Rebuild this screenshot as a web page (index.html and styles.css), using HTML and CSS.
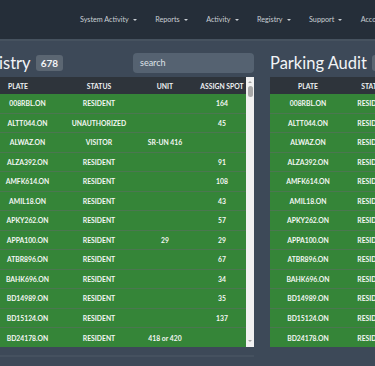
FILE: index.html
```html
<!DOCTYPE html>
<html>
<head>
<meta charset="utf-8">
<link rel="stylesheet" href="styles.css">
</head>
<body>
<nav class="nav">
  <a class="nav-item">System Activity <span class="caret"></span></a>
  <a class="nav-item">Reports <span class="caret"></span></a>
  <a class="nav-item">Activity <span class="caret"></span></a>
  <a class="nav-item">Registry <span class="caret"></span></a>
  <a class="nav-item">Support <span class="caret"></span></a>
  <a class="nav-item">Account <span class="caret"></span></a>
</nav>
<main class="page">
  <section class="panel panel-left">
    <div class="panel-head">
      <h2 class="title title-cut">Registry</h2>
      <span class="badge">678</span>
      <div class="search">search</div>
    </div>
    <div class="table-wrap">
      <div class="table">
        <div class="row head lcols">
          <div class="c plate-h">PLATE</div><div class="c">STATUS</div><div class="c">UNIT</div><div class="c spot">ASSIGN SPOT</div>
        </div>
        <div class="row lcols"><div class="c">008RBL.ON</div><div class="c">RESIDENT</div><div class="c"></div><div class="c spot">164</div></div>
        <div class="row lcols"><div class="c">ALTT044.ON</div><div class="c">UNAUTHORIZED</div><div class="c"></div><div class="c spot">45</div></div>
        <div class="row lcols"><div class="c">ALWAZ.ON</div><div class="c">VISITOR</div><div class="c">SR-UN 416</div><div class="c spot"></div></div>
        <div class="row lcols"><div class="c">ALZA392.ON</div><div class="c">RESIDENT</div><div class="c"></div><div class="c spot">91</div></div>
        <div class="row lcols"><div class="c">AMFK614.ON</div><div class="c">RESIDENT</div><div class="c"></div><div class="c spot">108</div></div>
        <div class="row lcols"><div class="c">AMIL18.ON</div><div class="c">RESIDENT</div><div class="c"></div><div class="c spot">43</div></div>
        <div class="row lcols"><div class="c">APKY262.ON</div><div class="c">RESIDENT</div><div class="c"></div><div class="c spot">57</div></div>
        <div class="row lcols"><div class="c">APPA100.ON</div><div class="c">RESIDENT</div><div class="c">29</div><div class="c spot">29</div></div>
        <div class="row lcols"><div class="c">ATBR896.ON</div><div class="c">RESIDENT</div><div class="c"></div><div class="c spot">67</div></div>
        <div class="row lcols"><div class="c">BAHK696.ON</div><div class="c">RESIDENT</div><div class="c"></div><div class="c spot">34</div></div>
        <div class="row lcols"><div class="c">BD14989.ON</div><div class="c">RESIDENT</div><div class="c"></div><div class="c spot">35</div></div>
        <div class="row lcols"><div class="c">BD15124.ON</div><div class="c">RESIDENT</div><div class="c"></div><div class="c spot">137</div></div>
        <div class="row lcols last"><div class="c">BD24178.ON</div><div class="c">RESIDENT</div><div class="c">418 or 420</div><div class="c spot"></div></div>
      </div>
      <div class="scrollbar">
        <span class="arrow-up"></span>
        <span class="thumb"></span>
        <span class="spacer"></span>
        <span class="arrow-down"></span>
      </div>
    </div>
    <div class="foot-line"></div>
  </section>
  <section class="panel panel-right">
    <div class="panel-head">
      <h2 class="title">Parking Audit</h2>
      <span class="badge">13</span>
    </div>
    <div class="table">
      <div class="row head rcols"><div class="c">PLATE</div><div class="c">STATUS</div></div>
      <div class="row rcols"><div class="c">008RBL.ON</div><div class="c">RESIDENT</div></div>
      <div class="row rcols"><div class="c">ALTT044.ON</div><div class="c">RESIDENT</div></div>
      <div class="row rcols"><div class="c">ALWAZ.ON</div><div class="c">RESIDENT</div></div>
      <div class="row rcols"><div class="c">ALZA392.ON</div><div class="c">RESIDENT</div></div>
      <div class="row rcols"><div class="c">AMFK614.ON</div><div class="c">RESIDENT</div></div>
      <div class="row rcols"><div class="c">AMIL18.ON</div><div class="c">RESIDENT</div></div>
      <div class="row rcols"><div class="c">APKY262.ON</div><div class="c">RESIDENT</div></div>
      <div class="row rcols"><div class="c">APPA100.ON</div><div class="c">RESIDENT</div></div>
      <div class="row rcols"><div class="c">ATBR896.ON</div><div class="c">RESIDENT</div></div>
      <div class="row rcols"><div class="c">BAHK696.ON</div><div class="c">RESIDENT</div></div>
      <div class="row rcols"><div class="c">BD14989.ON</div><div class="c">RESIDENT</div></div>
      <div class="row rcols"><div class="c">BD15124.ON</div><div class="c">RESIDENT</div></div>
      <div class="row rcols last"><div class="c">BD24178.ON</div><div class="c">RESIDENT</div></div>
    </div>
  </section>
</main>
</body>
</html>
```
FILE: styles.css
```css
* { box-sizing: border-box; }
html, body { margin: 0; padding: 0; }
body {
  width: 375px;
  height: 366px;
  overflow: hidden;
  background: #3d4958;
  font-family: Lato, "Open Sans", sans-serif;
  color: #fff;
}
.nav {
  height: 41px;
  background: #252e39;
  border-bottom: 2px solid #46525f;
  display: flex;
  align-items: center;
  padding-left: 80px;
  gap: 18.5px;
  white-space: nowrap;
  overflow: hidden;
}
.nav-item {
  font-size: 7.2px;
  color: #c9ced4;
  display: flex;
  align-items: center;
  gap: 4px;
  flex-shrink: 0;
}
.caret {
  width: 0;
  height: 0;
  border-left: 2px solid transparent;
  border-right: 2px solid transparent;
  border-top: 2.5px solid #c9ced4;
}
.page {
  display: flex;
  gap: 16px;
  padding-top: 12px;
}
.panel { flex-shrink: 0; }
.panel-left { width: 254px; }
.panel-right { width: 200px; }
.panel-head {
  display: flex;
  align-items: center;
  height: 20px;
  margin-bottom: 4px;
}
.title {
  margin: 0;
  font-size: 16.5px;
  font-weight: 400;
  color: #f2f4f6;
  line-height: 20px;
}
.title-cut { margin-left: -28px; }
.badge {
  margin-left: 5px;
  background: #5b6672;
  color: #f3f4f6;
  font-size: 10px;
  font-weight: 700;
  padding: 2px 5px;
  border-radius: 3px;
  line-height: 12px;
}
.search {
  margin-left: auto;
  width: 121px;
  height: 20px;
  background: #556271;
  border-radius: 4px;
  font-size: 9px;
  color: #dfe3e8;
  padding-left: 7px;
  line-height: 20px;
}
.table-wrap { display: flex; }
.table { flex: 1; }
.row {
  display: grid;
  height: 19.5px;
  background: #358538;
  border-bottom: 1px solid #4b7750;
  align-items: center;
  font-size: 6.8px;
  font-weight: 700;
  color: #f4f7f4;
  white-space: nowrap;
}
.row.last { border-bottom: none; height: 19px; }
.row.head {
  height: 17px;
  background: #2e343b;
  border-bottom: none;
  font-size: 6.8px;
  color: #eef0f2;
}
.c { text-align: center; overflow: hidden; }
.lcols { grid-template-columns: 55px 88px 44px 59px; }
.lcols .spot { padding-left: 11px; }
.plate-h { text-align: left; padding-left: 8px; }
.rcols { grid-template-columns: 76px 55px; }
.scrollbar {
  width: 8px;
  background: #f1f1f1;
  display: flex;
  flex-direction: column;
  align-items: center;
  padding: 4px 0 5px;
}
.arrow-up {
  width: 0; height: 0;
  border-left: 2px solid transparent;
  border-right: 2px solid transparent;
  border-bottom: 2.5px solid #a3a3a3;
}
.arrow-down {
  width: 0; height: 0;
  border-left: 2px solid transparent;
  border-right: 2px solid transparent;
  border-top: 2.5px solid #a3a3a3;
}
.thumb {
  margin-top: 3px;
  width: 5px;
  height: 11px;
  background: #a8a8a8;
  border-radius: 3px;
}
.spacer { flex: 1; }
.foot-line {
  margin-top: 8px;
  height: 2px;
  background: #45515f;
}
```
